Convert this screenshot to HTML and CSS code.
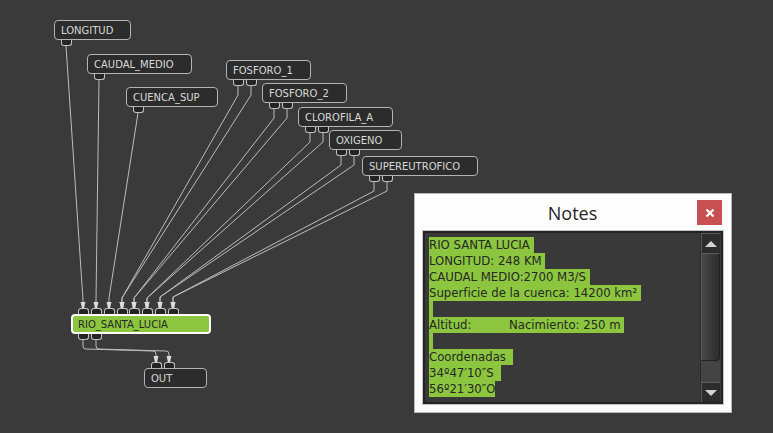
FILE: index.html
```html
<!DOCTYPE html>
<html lang="es">
<head>
<meta charset="utf-8">
<title>Rio Santa Lucia</title>
<link rel="stylesheet" href="styles.css">
</head>
<body>
<main class="canvas">
  <svg class="wires" aria-hidden="true">
    <defs>
      <marker id="tip" markerUnits="userSpaceOnUse" markerWidth="6" markerHeight="8" refX="3" refY="6" viewBox="0 0 6 8">
        <path d="M0.5 0H5.5L4.6 3.5L4 7H2L1.4 3.5Z" fill="#dcdcdc"/>
      </marker>
    </defs>
    <g class="wire">
      <path d="M66 46L83 300V308"/>
      <path d="M99 80L96 300V308"/>
      <path d="M138 113L109 298V308"/>
      <path d="M238 86V95L122 298V308"/>
      <path d="M251 86V95L122 298V308"/>
      <path d="M274 109V118L134 298V308"/>
      <path d="M287 109V118L134 298V308"/>
      <path d="M310 133V142L147 298V308"/>
      <path d="M323 133V142L147 298V308"/>
      <path d="M341 156V165L160 297V308"/>
      <path d="M354 156V165L160 297V308"/>
      <path d="M374 182V191L173 297V308"/>
      <path d="M387 182V191L173 297V308"/>
      <path d="M83 340V346Q83 349 86 349L153 351Q156 351 156 354V362"/>
      <path d="M96 340V346Q96 349 99 349L166 351Q169 351 169 354V362"/>
    </g>
  </svg>

  <div class="node longitud"><span class="label">LONGITUD</span><div class="ports out"><i></i></div></div>
  <div class="node caudal"><span class="label">CAUDAL_MEDIO</span><div class="ports out"><i></i></div></div>
  <div class="node cuenca"><span class="label">CUENCA_SUP</span><div class="ports out"><i></i></div></div>
  <div class="node fosforo-1"><span class="label">FOSFORO_1</span><div class="ports out"><i></i><i></i></div></div>
  <div class="node fosforo-2"><span class="label">FOSFORO_2</span><div class="ports out"><i></i><i></i></div></div>
  <div class="node clorofila"><span class="label">CLOROFILA_A</span><div class="ports out"><i></i><i></i></div></div>
  <div class="node oxigeno"><span class="label">OXIGENO</span><div class="ports out"><i></i><i></i></div></div>
  <div class="node supereutrofico"><span class="label">SUPEREUTROFICO</span><div class="ports out"><i></i><i></i></div></div>
  <div class="node rio selected"><div class="ports in"><i></i><i></i><i></i><i></i><i></i><i></i><i></i><i></i></div><span class="label">RIO_SANTA_LUCIA</span><div class="ports out"><i></i><i></i></div></div>
  <div class="node result"><div class="ports in"><i></i><i></i></div><span class="label">OUT</span></div>

  <section class="window" aria-labelledby="notes-title">
    <header class="titlebar">
      <h1 id="notes-title">Notes</h1>
      <button class="close" type="button" aria-label="Close">
        <svg width="10" height="8" viewBox="0 0 10 8"><path d="M1.5 0.5L8.5 7.5M8.5 0.5L1.5 7.5" stroke="#fff" stroke-width="2.2"/></svg>
      </button>
    </header>
    <div class="editor">
      <textarea id="notes" class="text" aria-labelledby="notes-title" spellcheck="false" autofocus>RIO SANTA LUCIA
LONGITUD: 248 KM
CAUDAL MEDIO:2700 M3/S
Superficie de la cuenca: 14200 km²

Altitud:&#9;Nacimiento: 250 m

Coordenadas 
34º47′10″S 
56º21′30″O</textarea>
      <div class="scroll">
        <button class="step" type="button" aria-label="Scroll up"><svg width="12" height="6" viewBox="0 0 12 6"><path d="M0 6L6 0L12 6Z" fill="#d4d4d4"/></svg></button>
        <div class="track"><div class="thumb"></div></div>
        <button class="step" type="button" aria-label="Scroll down"><svg width="12" height="6" viewBox="0 0 12 6"><path d="M0 0L6 6L12 0Z" fill="#d4d4d4"/></svg></button>
      </div>
    </div>
  </section>
</main>
<script src="script.js"></script>
</body>
</html>
```
FILE: script.js
```js
const notes = document.getElementById("notes");
notes.focus();
notes.select();
notes.scrollTop = 0;
```
FILE: styles.css
```css
* { box-sizing: border-box; }

body {
  margin: 0;
  background: #3a3a3a;
  font-family: "DejaVu Sans Condensed", "DejaVu Sans", sans-serif;
}

.canvas {
  position: relative;
  min-height: 100vh;
  overflow: hidden;
}

.wires {
  position: absolute;
  inset: 0;
  width: 100%;
  height: 100%;
}

.wire path {
  fill: none;
  stroke: #bcbcbc;
  stroke-width: 1;
  marker-end: url(#tip);
}

/* Nodes of the graph */
.node {
  position: absolute;
  display: flex;
  flex-direction: column;
}

.label {
  height: 20px;
  padding: 0 6px;
  border: 1px solid #b4b4b4;
  border-radius: 4px;
  background: #2c2c2c;
  color: #d8d8d8;
  font-family: "DejaVu Sans", sans-serif;
  font-size: 10px;
  line-height: 19px;
  white-space: nowrap;
}

.selected .label {
  border: 2px solid #fff;
  padding: 0 5px;
  background: #8cc63e;
  color: #262626;
  line-height: 17px;
}

.ports {
  display: flex;
  gap: 2px;
  padding-left: 7px;
}

.ports i {
  width: 11px;
  height: 6px;
  border: 1px solid #c0c0c0;
  background: #242424;
}

.out i { border-top: 0; border-radius: 0 0 3px 3px; }
.in i { border-bottom: 0; border-radius: 3px 3px 0 0; }

.longitud { left: 54px; top: 20px; width: 77px; }
.caudal { left: 87px; top: 54px; width: 105px; }
.cuenca { left: 126px; top: 87px; width: 92px; }
.fosforo-1 { left: 226px; top: 60px; width: 85px; }
.fosforo-2 { left: 262px; top: 83px; width: 85px; }
.clorofila { left: 298px; top: 107px; width: 95px; }
.oxigeno { left: 329px; top: 130px; width: 73px; }
.supereutrofico { left: 362px; top: 156px; width: 116px; }
.rio { left: 71px; top: 308px; width: 140px; }
.rio .in { width: 108px; gap: 0; justify-content: space-between; }
.result { left: 144px; top: 362px; width: 63px; }

/* Notes window */
.window {
  position: absolute;
  left: 414px;
  top: 193px;
  width: 318px;
  padding: 0 8px 8px;
  border: 1px solid #b4b8b8;
  background: #fdfdfd;
}

.titlebar {
  display: grid;
  grid-template-columns: 25px 1fr 25px;
  align-items: center;
  height: 37px;
  padding-right: 1px;
}

.titlebar h1 {
  grid-column: 2;
  margin: 0;
  color: #262626;
  font: 400 18px/24px "Open Sans", sans-serif;
  text-align: center;
}

.close {
  display: grid;
  place-items: center;
  width: 25px;
  height: 25px;
  padding: 0;
  border: 0;
  background: #c75050;
}

.editor {
  display: flex;
  height: 173px;
  padding-right: 1px;
  border: 2px solid #242424;
  background: #393939;
  outline: 1px solid #c4c4c4;
}

.text {
  flex: 1;
  min-width: 0;
  padding: 4px 0 0 4px;
  border: 0;
  outline: 0;
  resize: none;
  overflow: hidden;
  background: transparent;
  color: #d8d8d8;
  font: 13px/16px "DejaVu Sans Condensed", "DejaVu Sans", sans-serif;
  white-space: pre;
  tab-size: 80px;
}

.text::selection {
  background: #8cc63e;
  color: #262626;
}

.scroll {
  display: flex;
  flex-direction: column;
  width: 20px;
  border-left: 1px solid #2a2a2a;
}

.step {
  display: grid;
  place-items: center;
  height: 20px;
  padding: 0;
  border: 0;
  border-top: 1px solid #5c5c5c;
  border-left: 1px solid #5c5c5c;
  background: #2c2c2c;
}

.track { flex: 1; background: #444; }

.thumb {
  height: 84%;
  border: 1px solid #5c5c5c;
  border-right-color: #202020;
  border-bottom-color: #202020;
  border-radius: 2px 2px 4px 2px;
  background: linear-gradient(90deg, #484848, #2c2c2c);
}
```
